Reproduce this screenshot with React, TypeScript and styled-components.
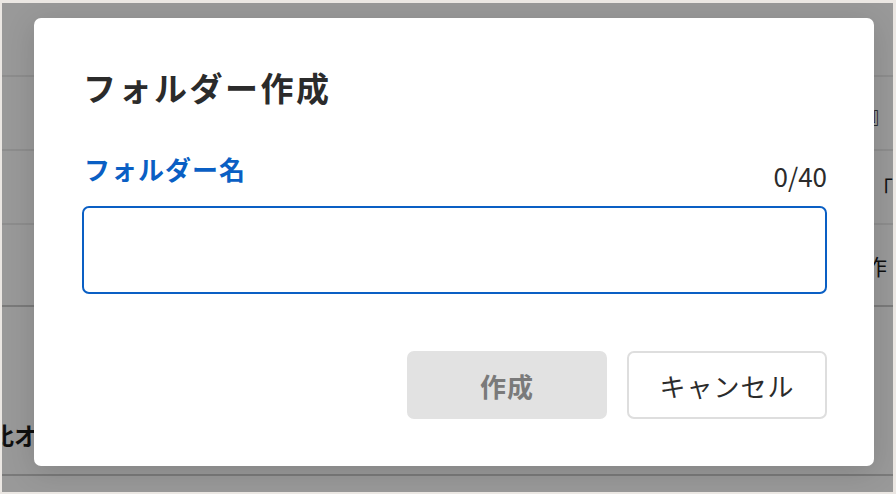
import React from "react";
import styled, { createGlobalStyle } from "styled-components";

const Global = createGlobalStyle`
  html, body { margin: 0; padding: 0; }
  body { font-family: "Noto Sans CJK JP", "Noto Sans", sans-serif; }
`;

const Frame = styled.div`
  width: 896px;
  height: 494px;
  box-sizing: border-box;
  padding: 3px 3px 2px 2px;
  background: #ebe7e3;
  overflow: hidden;
`;

const Page = styled.div`
  position: relative;
  width: 100%;
  height: 100%;
  background: #ffffff;
  overflow: hidden;
`;

const Row = styled.div<{ $h: number; $line: string; $end?: boolean }>`
  height: ${(p) => p.$h}px;
  box-sizing: border-box;
  border-bottom: 2px solid ${(p) => p.$line};
  display: flex;
  align-items: ${(p) => (p.$end ? "flex-end" : "center")};
  justify-content: space-between;
  padding-bottom: ${(p) => (p.$end ? 24 : 0)}px;
  color: #1a1a1a;
`;

const SideText = styled.span<{ $bold?: boolean; $shift?: number; $size?: number }>`
  font-weight: ${(p) => (p.$bold ? 700 : 400)};
  font-size: ${(p) => p.$size ?? 22}px;
  line-height: 1.2;
  white-space: nowrap;
  transform: translateX(${(p) => p.$shift ?? 0}px);
`;

const Overlay = styled.div`
  position: absolute;
  inset: 0;
  background: rgba(0, 0, 0, 0.4);
  display: flex;
  padding: 15px 19px 26px 32px;
`;

const Modal = styled.div`
  flex: 1;
  background: #ffffff;
  border-radius: 7px;
  box-shadow: 0 6px 30px rgba(0, 0, 0, 0.14);
  padding: 47px 47px 47px 48px;
  display: flex;
  flex-direction: column;
`;

const Title = styled.h1`
  margin: 0 0 0 1px;
  font-size: 33px;
  line-height: 44px;
  font-weight: 700;
  letter-spacing: 2.5px;
  color: #2b2b2b;
`;

const FieldHeader = styled.div`
  display: flex;
  justify-content: space-between;
  align-items: flex-end;
  margin-top: 43px;
`;

const Label = styled.label`
  font-size: 26px;
  line-height: 34px;
  font-weight: 700;
  letter-spacing: 1px;
  color: #0a5fc4;
  margin-left: 2px;
  margin-bottom: 6px;
`;

const Counter = styled.span`
  font-size: 26px;
  line-height: 32px;
  color: #2b2b2b;
`;

const Input = styled.input`
  margin-top: 14px;
  height: 88px;
  flex-shrink: 0;
  box-sizing: border-box;
  border: 2px solid #0a5fc4;
  border-radius: 7px;
  outline: none;
  font-size: 24px;
  padding: 0 16px;
  font-family: inherit;
`;

const Actions = styled.div`
  margin-top: auto;
  display: flex;
  justify-content: flex-end;
  gap: 20px;
`;

const Button = styled.button<{ $primary?: boolean }>`
  width: 200px;
  height: 68px;
  box-sizing: border-box;
  border-radius: 7px;
  font-family: inherit;
  font-size: 26px;
  letter-spacing: 1px;
  cursor: pointer;
  border: 2px solid ${(p) => (p.$primary ? "#e2e2e2" : "#dedede")};
  background: ${(p) => (p.$primary ? "#e2e2e2" : "#ffffff")};
  color: ${(p) => (p.$primary ? "#7a7a7a" : "#2b2b2b")};
  font-weight: ${(p) => (p.$primary ? 700 : 400)};
`;

export default function App() {
  return (
    <>
      <Global />
      <Frame>
        <Page>
          <Row $h={74} $line="#ececec" />
          <Row $h={74} $line="#ececec">
            <span />
            <SideText $shift={-2}>』</SideText>
          </Row>
          <Row $h={74} $line="#ececec">
            <span />
            <SideText $shift={0}>「</SideText>
          </Row>
          <Row $h={82} $line="#cccccc">
            <span />
            <SideText $shift={-6}>作</SideText>
          </Row>
          <Row $h={169} $line="#cccccc" $end>
            <SideText $bold $size={24} $shift={-12}>比オ</SideText>
          </Row>
          <Overlay>
            <Modal role="dialog">
              <Title>フォルダー作成</Title>
              <FieldHeader>
                <Label htmlFor="folder">フォルダー名</Label>
                <Counter>0/40</Counter>
              </FieldHeader>
              <Input id="folder" />
              <Actions>
                <Button $primary disabled>作成</Button>
                <Button>キャンセル</Button>
              </Actions>
            </Modal>
          </Overlay>
        </Page>
      </Frame>
    </>
  );
}
